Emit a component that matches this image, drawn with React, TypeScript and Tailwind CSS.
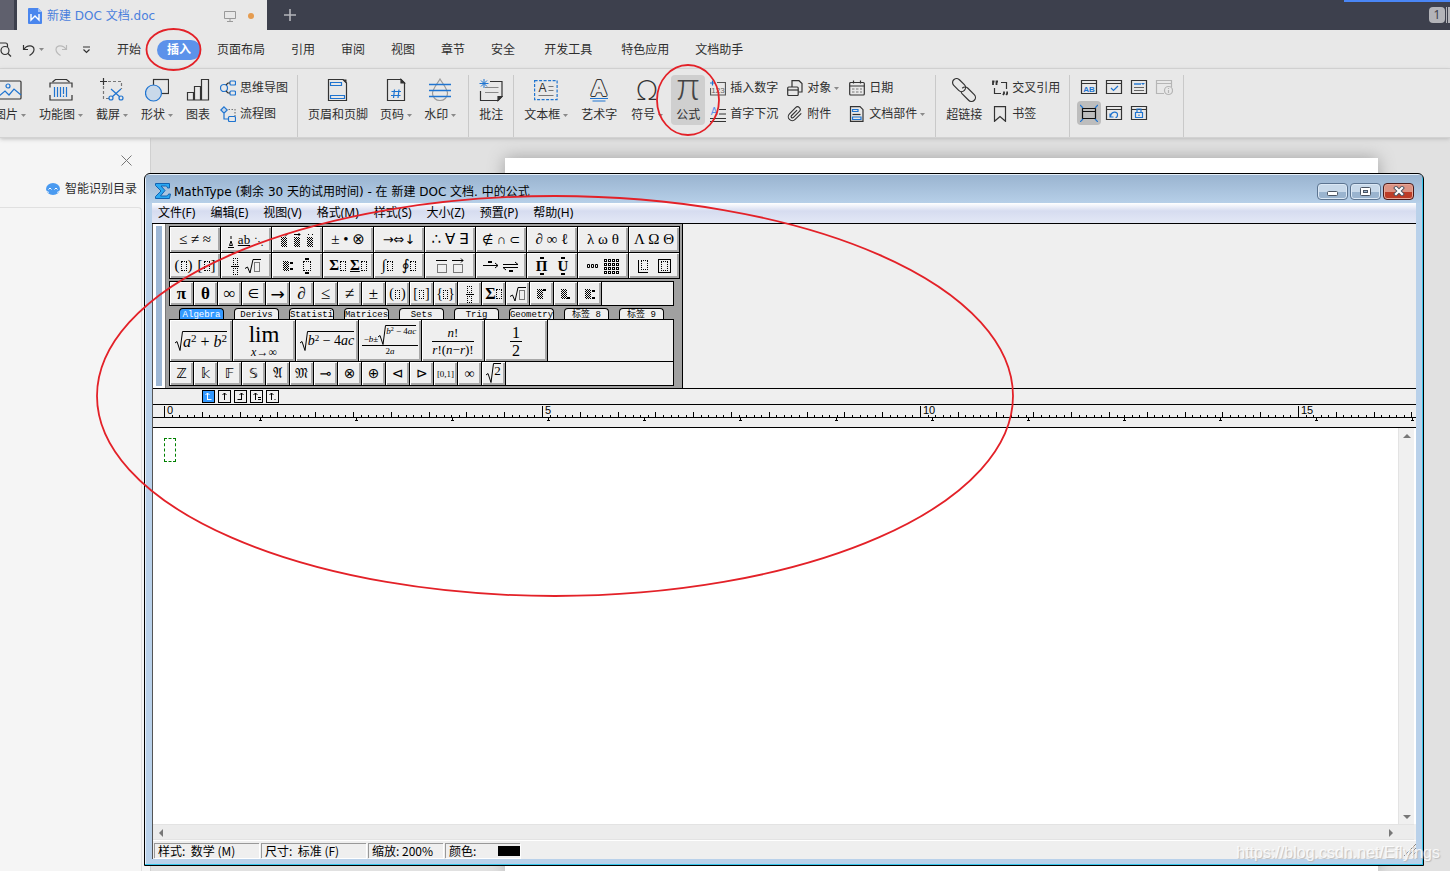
import type { ReactNode } from "react";
import clsx from "clsx";

interface WrapProps {
  children?: ReactNode;
  className?: string;
}

const INK = "#333333";
const BLUE = "#1f74d0";

/* ---------- ribbon helpers ---------- */

function Caret() {
  return (
    <svg width="5" height="3" viewBox="0 0 5 3" className="ml-[3px] shrink-0">
      <path d="M0 0h5L2.5 3z" fill="#8a8a8a" />
    </svg>
  );
}

function Icon({ w = 24, h = 24, children }: { w?: number; h?: number; children: ReactNode }) {
  return (
    <svg
      width={w}
      height={h}
      viewBox={`0 0 ${w} ${h}`}
      fill="none"
      stroke={INK}
      strokeWidth="1.2"
      className="shrink-0"
    >
      {children}
    </svg>
  );
}

interface GlyphProps {
  x: number;
  y: number;
  size: number;
  fill?: string;
  className?: string;
  children: string;
}

function Glyph({ x, y, size, fill = INK, className, children }: GlyphProps) {
  return (
    <text
      x={x}
      y={y}
      fontSize={size}
      fill={fill}
      stroke="none"
      textAnchor="middle"
      className={className ?? "font-['Liberation_Sans',sans-serif]"}
    >
      {children}
    </text>
  );
}

function Group({ children, className }: WrapProps) {
  return (
    <div className={clsx("flex h-[63px] items-start border-r border-[#c9c9c9] pl-2.5", className)}>
      {children}
    </div>
  );
}

interface ToolProps {
  label: string;
  icon: ReactNode;
  caret?: boolean;
  className?: string;
}

function BigTool({ label, icon, caret, className }: ToolProps) {
  return (
    <button
      className={clsx(
        "flex h-[50px] shrink-0 flex-col items-center gap-[5px] whitespace-nowrap rounded pt-[3px] leading-4",
        className
      )}
    >
      {icon}
      <span className="flex items-center">
        {label}
        {caret && <Caret />}
      </span>
    </button>
  );
}

function SmallTool({ label, icon, caret }: ToolProps) {
  return (
    <button className="flex h-[26px] items-center gap-1 whitespace-nowrap">
      {icon}
      <span className="flex items-center">
        {label}
        {caret && <Caret />}
      </span>
    </button>
  );
}

function Stack({ children, className }: WrapProps) {
  return <div className={clsx("flex shrink-0 flex-col", className)}>{children}</div>;
}

function FormTool({ label, active, children }: { label: string; active?: boolean; children: ReactNode }) {
  return (
    <button
      aria-label={label}
      className={clsx("flex h-6 w-6 items-center justify-center rounded", active && "bg-[#bdbdbd]")}
    >
      <Icon w={18} h={18}>
        {children}
      </Icon>
    </button>
  );
}

const formFrame = <path d="M1.5 2.5h15v13h-15zM1.5 5.5h15" />;

/* ---------- top of the editor ---------- */

function TabBar() {
  return (
    <div className="flex h-[30px] bg-[#3d404d]">
      <div className="mr-[3px] w-3.5 bg-[#5f606d]" />
      <div className="flex w-[250px] items-center bg-[#e8e8e8] pl-[11px] pr-[13px] pt-0.5 text-[#4a80dd]">
        <svg width="14" height="16" viewBox="0 0 14 16">
          <path d="M1 0h9l4 4v11a1 1 0 0 1-1 1H1a1 1 0 0 1-1-1V1a1 1 0 0 1 1-1z" fill="#4a86ee" />
          <path d="M10 0v4h4z" fill="#9fc0f8" />
          <path d="M3 6v6l4-4 4 4V6" fill="none" stroke="#fff" strokeWidth="1.4" />
        </svg>
        <a
          href="#doc"
          className="ml-[5px] flex-1 whitespace-nowrap font-['DejaVu_Sans','Noto_Sans_CJK_SC',sans-serif]"
        >
          新建 DOC 文档.doc
        </a>
        <svg width="12" height="11" viewBox="0 0 12 11" fill="none" stroke="#999">
          <path d="M.5.5h11v7H.5zM6 8v2M3 10.5h6" />
        </svg>
        <span className="ml-[12px] h-1.5 w-1.5 rounded-full bg-[#e59c50]" />
      </div>
      <button aria-label="新建标签" className="flex w-[46px] items-center justify-center">
        <svg width="12" height="12" viewBox="0 0 12 12" stroke="#b4b5bb" strokeWidth="1.6">
          <path d="M6 0v12M0 6h12" />
        </svg>
      </button>
      <div className="ml-auto flex h-full w-[106px] justify-end gap-px border-t-2 border-[#4a86f5] pt-[5px]">
        <span className="h-4 w-4 rounded-sm bg-[#b3b4b9] text-center leading-4 text-[#3d404d]">1</span>
        <span className="h-4 w-px bg-[#b3b4b9]" />
        <span className="h-4 w-0.5 bg-[#b3b4b9]" />
      </div>
    </div>
  );
}

const menus = ["页面布局", "引用", "审阅", "视图", "章节", "安全"];
const moreMenus = ["开发工具", "特色应用"];

function MenuBar() {
  return (
    <div className="flex h-[39px] items-center border-b border-[#d6d6d6] pt-px">
      <button aria-label="打印预览" className="-ml-1">
        <Icon w={16} h={16}>
          <path d="M1 1h8.5a2 2 0 0 1 2 2v2M4 14H1" />
          <circle cx="9" cy="8.5" r="4" />
          <path d="M12 11.5l3 3" />
        </Icon>
      </button>
      <button aria-label="撤销" className="ml-2.5 flex items-center">
        <Icon w={14} h={14}>
          <path d="M1.5 2v4.5h4.5M2 6.5C4.5 2 12 1.5 12 6.5c0 3-2 4.5-4.5 6" />
        </Icon>
        <Caret />
      </button>
      <button aria-label="恢复" className="ml-2.5">
        <svg width="14" height="14" viewBox="0 0 14 14" fill="none" stroke="#b9b9b9" strokeWidth="1.2">
          <path d="M12.5 2v4.5H8M12 6.5C9.5 2 2 1.5 2 6.5c0 3 2 4.5 4.5 6" />
        </svg>
      </button>
      <button aria-label="自定义" className="ml-3.5">
        <Icon w={9} h={8}>
          <path d="M1 1h7M1.5 3.5l3 3 3-3" />
        </Icon>
      </button>
      <nav className="ml-[26px] flex items-center gap-[26px] whitespace-nowrap pt-px">
        <button>开始</button>
        <button className="-mx-2.5 h-5 rounded-full bg-[#5c92ea] px-2.5 font-bold text-white">插入</button>
        {menus.map((m) => (
          <button key={m}>{m}</button>
        ))}
        {moreMenus.map((m) => (
          <button key={m} className="ml-[3px]">
            {m}
          </button>
        ))}
        <button>文档助手</button>
      </nav>
    </div>
  );
}

function Ribbon() {
  return (
    <div className="relative flex h-[69px] overflow-hidden border-b border-[#d2d2d2] pt-1.5 shadow-[0_1px_4px_#bbb]">
      <Group className="-ml-4 gap-[13px] pr-[9px]">
        <BigTool
          label="图片"
          caret
          icon={
            <Icon>
              <rect x="1" y="3" width="22" height="18" rx="1" />
              <g stroke={BLUE}>
                <circle cx="10" cy="8" r="2" />
                <path d="M1 18l6-5 4 4 5-6 7 6" />
              </g>
            </Icon>
          }
        />
        <BigTool
          label="功能图"
          caret
          icon={
            <Icon>
              <path d="M3.5 4l3-2.5h11l3 2.5M1 9.5V5h22v4.5M1 17v5h22v-5" />
              <path d="M5.5 9v10M8.5 9v10M11.5 9v10M14.5 9v7M17.5 9v10M14.5 17.5V19" stroke={BLUE} />
            </Icon>
          }
        />
        <BigTool
          label="截屏"
          caret
          icon={
            <Icon>
              <path d="M3.5 0v7M0 3.5h7" />
              <path d="M8 3.5h13.5V11M3.5 8v12.5H9" stroke="#777" strokeDasharray="3 2" />
              <g stroke={BLUE}>
                <path d="M11 11l9 8M21 11l-9 8" />
                <circle cx="11" cy="20" r="2" />
                <circle cx="21" cy="20" r="2" />
              </g>
            </Icon>
          }
        />
        <BigTool
          label="形状"
          caret
          icon={
            <Icon>
              <rect x="8.5" y="1.5" width="15" height="14" />
              <circle cx="8.5" cy="15" r="8" fill="#c9d9ea" stroke={BLUE} />
            </Icon>
          }
        />
        <BigTool
          label="图表"
          icon={
            <Icon>
              <path d="M1.5 22V14.5h6V22zM8.5 22V8.5h6V22zM15.5 22V1.5h7V22z" />
            </Icon>
          }
        />
        <Stack className="-ml-[3px]">
          <SmallTool
            label="思维导图"
            icon={
              <Icon w={16} h={16}>
                <g stroke={BLUE}>
                  <circle cx="4" cy="8" r="3.5" />
                  <rect x="10" y="1" width="5.5" height="4" rx="1" />
                  <rect x="10" y="11" width="5.5" height="4" rx="1" />
                </g>
                <path d="M6 5l2-2h2M6 11l2 2h2" />
              </Icon>
            }
          />
          <SmallTool
            label="流程图"
            icon={
              <Icon w={16} h={16}>
                <path d="M4 .8L7.2 4 4 7.2.8 4z" stroke={BLUE} fill="#c9d9ea" />
                <path d="M8.5 3.5H15V10" stroke="#777" strokeDasharray="1.5 1.5" />
                <path d="M4 7.5V13h4" stroke={BLUE} />
                <rect x="8.5" y="10.5" width="7" height="5" rx="1" stroke={BLUE} />
              </Icon>
            }
          />
        </Stack>
      </Group>

      <Group className="gap-3 pr-3">
        <BigTool
          label="页眉和页脚"
          icon={
            <Icon>
              <path d="M2.5 1.5H17l3.5 3.5v17.5h-18z" />
              <path d="M16.5 1.5L20.5 5.5v-4z" fill={INK} stroke="none" />
              <path d="M4.5 4.5h11v3h-11zM4.5 17.5h14v3h-14z" stroke={BLUE} />
            </Icon>
          }
        />
        <BigTool
          label="页码"
          caret
          icon={
            <Icon>
              <path d="M3.5 1.5H17l3.5 3.5v17.5h-17z" />
              <path d="M17 1.5V5h3.5z" fill={INK} />
              <path d="M10.5 11.5l-1 8.5M15 11.5l-1 8.5M7.5 13.5H17M7 17.5h9.5" stroke={BLUE} />
            </Icon>
          }
        />
        <BigTool
          label="水印"
          caret
          icon={
            <Icon>
              <path d="M12 1C9 6 4.5 11 4.5 15.5a7.5 7 0 0 0 15 0C19.5 11 15 6 12 1z" stroke="#999" />
              <path d="M1 6.5h22M1 12.5h22M1 18.5h22" stroke={BLUE} strokeWidth="1.4" />
            </Icon>
          }
        />
      </Group>

      <Group className="pr-2.5">
        <BigTool
          label="批注"
          icon={
            <Icon>
              <path d="M11 3.5h12v15l-4 4H1.5V13" />
              <path d="M23 18.5h-4v4z" fill={INK} />
              <path d="M6 9.5h13.5M6 14.5h13.5" stroke="#888" />
              <path d="M5 1v9M.5 5.5h9M2 2.5l6 6M8 2.5l-6 6" stroke={BLUE} strokeWidth="1" />
            </Icon>
          }
        />
      </Group>

      <Group className="gap-[13px] pr-2.5">
        <BigTool
          label="文本框"
          caret
          icon={
            <Icon>
              <rect x=".6" y="2.6" width="22.5" height="19" stroke={BLUE} strokeDasharray="3 1.5" />
              <Glyph x={8.5} y={14} size={12}>
                A
              </Glyph>
              <path d="M14.5 8.5h5M14.5 12.5h5M4.5 17.5h15" stroke="#777" />
            </Icon>
          }
        />
        <BigTool
          label="艺术字"
          icon={
            <Icon>
              <text
                x="12"
                y="17"
                fontSize="20"
                textAnchor="middle"
                strokeWidth="4"
                strokeLinejoin="round"
                className="font-['Liberation_Sans',sans-serif]"
              >
                A
              </text>
              <text
                x="12"
                y="17"
                fontSize="20"
                textAnchor="middle"
                stroke="#e8e8e8"
                strokeWidth="2"
                strokeLinejoin="round"
                className="font-['Liberation_Sans',sans-serif]"
              >
                A
              </text>
              <path d="M3 20.5h18M5.5 23h13" stroke={BLUE} />
            </Icon>
          }
        />
        <BigTool
          label="符号"
          caret
          className="ml-px"
          icon={
            <Icon>
              <Glyph x={12} y={22} size={28} className="font-['Lato','Open_Sans',sans-serif] font-light">
                Ω
              </Glyph>
            </Icon>
          }
        />
        <BigTool
          label="公式"
          className="-ml-[5px] bg-[#cfcfcf] px-[5px]"
          icon={
            <Icon>
              <Glyph x={12} y={22} size={40} fill="#444" className="font-['Lato','Open_Sans',sans-serif] font-light">
                π
              </Glyph>
            </Icon>
          }
        />
        <Stack className="-ml-2">
          <SmallTool
            label="插入数字"
            icon={
              <Icon w={16} h={16}>
                <path d="M7 2.5h8.5v12.5H.5V8" stroke="#555" />
                <path d="M0 3h5M2.5.5v5" stroke={BLUE} />
                <Glyph x={8} y={12.5} size={8} fill="#666">
                  123
                </Glyph>
              </Icon>
            }
          />
          <SmallTool
            label="首字下沉"
            icon={
              <Icon w={16} h={16}>
                <Glyph x={4} y={9} size={10} fill="#5c92ea">
                  A
                </Glyph>
                <path d="M9 3.5h7M9 8h7M0 12.5h16M0 15.5h16" />
              </Icon>
            }
          />
        </Stack>
        <Stack className="-ml-1">
          <SmallTool
            label="对象"
            caret
            icon={
              <Icon w={16} h={16}>
                <path d="M5 7V.7h7L15 3.5V12h-3.5" />
                <rect x=".7" y="7" width="10.5" height="8.5" rx="1" />
                <path d="M.7 10h10.5" />
              </Icon>
            }
          />
          <SmallTool
            label="附件"
            icon={
              <svg width="16" height="16" viewBox="0 0 24 24" fill="none" stroke={INK} strokeWidth="1.7">
                <path d="M21.4 11l-9.2 9.2a6 6 0 0 1-8.5-8.5l9.2-9.2a4 4 0 0 1 5.7 5.7l-9.2 9.2a2 2 0 0 1-2.8-2.8l8.5-8.5" />
              </svg>
            }
          />
        </Stack>
        <Stack className="-ml-[3px]">
          <SmallTool
            label="日期"
            icon={
              <Icon w={16} h={16}>
                <rect x=".7" y="2.5" width="14.6" height="12.5" rx="1" />
                <path d="M.7 6h14.6M4.5.5v3M11.5.5v3" />
                <path d="M3 9h2.5M7 9h2.5M11 9h2M3 12h2.5M7 12h2.5M11 12h2" stroke="#777" />
              </Icon>
            }
          />
          <SmallTool
            label="文档部件"
            caret
            icon={
              <Icon w={16} h={16}>
                <path d="M1.5.7H11l3 3v11.7H1.5z" />
                <path d="M3.5 3.5H9v2H3.5zM3.5 11h8.5v2.5H3.5z" stroke={BLUE} />
                <path d="M3.5 8.5h8" />
              </Icon>
            }
          />
        </Stack>
      </Group>

      <Group className="gap-2.5 pr-[9px]">
        <BigTool
          label="超链接"
          icon={
            <Icon>
              <g transform="rotate(45 12 12)">
                <rect x="-2.5" y="8" width="15" height="8" rx="4" />
                <path d="M9.5 12a4 4 0 0 1 4-4h9a4 4 0 0 1 0 8h-9a4 4 0 0 1-2.5-1" />
              </g>
            </Icon>
          }
        />
        <Stack>
          <SmallTool
            label="交叉引用"
            icon={
              <Icon w={16} h={16}>
                <path d="M1 5V1.5h1.5M4.5 5V1.5H6" strokeWidth="1.8" />
                <path d="M9 2.5h5.5V9M2.5 8v5.5H9" />
                <path d="M12 11.5v2l-1 1.5M15.2 11.5v2l-1 1.5" strokeWidth="1.8" />
              </Icon>
            }
          />
          <SmallTool
            label="书签"
            icon={
              <Icon w={16} h={16}>
                <path d="M2.5.7h11v14.6L8 10.5l-5.5 4.8z" />
              </Icon>
            }
          />
        </Stack>
      </Group>

      <Group className="!pl-[7px] pr-[7px]">
        <div className="grid grid-cols-4 gap-x-px gap-y-0.5">
          <FormTool label="文字型窗体域">
            {formFrame}
            <Glyph x={9} y={14} size={8} fill={BLUE} className="font-['Liberation_Sans',sans-serif] font-bold">
              AB
            </Glyph>
          </FormTool>
          <FormTool label="复选框窗体域">
            {formFrame}
            <path d="M6 10l2.5 2.5L13 8" stroke={BLUE} />
          </FormTool>
          <FormTool label="下拉型窗体域">
            <path d="M1.5 2.5h15v13h-15z" />
            <path d="M4 6h7" stroke={BLUE} strokeWidth="1.4" />
            <path d="M11 5h4l-2 2z" stroke="none" fill={BLUE} />
            <path d="M4 9.5h10M4 12.5h10" stroke="#666" />
          </FormTool>
          <FormTool label="窗体域选项">
            <g stroke="#b5b5b5">
              <path d="M9 15.5H1.5v-13h15V9M1.5 5.5h15" />
              <circle cx="13.5" cy="12.5" r="4" />
              <path d="M13.5 12v3M13.5 10v1" />
            </g>
          </FormTool>
          <FormTool label="窗体域底纹" active>
            <path d="M2.5 4.5h13v10h-13zM2.5 7.5h13" stroke="#111" />
            <path d="M0 1l3 3M18 1l-3 3M0 18l3-3M18 18l-3-3" stroke={BLUE} />
          </FormTool>
          <FormTool label="重新设置窗体域">
            {formFrame}
            <path d="M5 9.5v3.5h3.5M5.5 13C6 6.5 13 7 12.5 11c0 1.5-1 2.5-2 2.5" stroke={BLUE} />
          </FormTool>
          <FormTool label="保护窗体">
            {formFrame}
            <path d="M5.5 8.5h7v5h-7zM7 8.5V5h4v3.5M9 10.5v1.5" stroke={BLUE} />
          </FormTool>
        </div>
      </Group>
    </div>
  );
}

function Outline() {
  return (
    <aside className="flex w-[151px] shrink-0 flex-col border-r border-[#d0d0d0] bg-[#f5f5f5]">
      <button aria-label="关闭" className="ml-auto mr-[18px] mt-[17px]">
        <svg width="11" height="11" viewBox="0 0 11 11" stroke="#777">
          <path d="M.5.5l10 10M10.5.5l-10 10" />
        </svg>
      </button>
      <button className="mt-[13px] flex h-5 items-center gap-[5px] self-start whitespace-nowrap pl-[46px]">
        <svg width="14" height="12" viewBox="0 0 14 12">
          <ellipse cx="7" cy="6" rx="7" ry="6" fill="#4a9af0" />
          <path d="M2.5 6.5l1.5-1.5 1.5 1.5M8.5 6.5L10 5l1.5 1.5" fill="none" stroke="#fff" />
          <path d="M0 8l3 1.5M14 8l-3 1.5" stroke="#fff" strokeWidth=".8" />
        </svg>
        智能识别目录
      </button>
      <div className="mr-2 mt-2 flex-1 rounded-tr border-r border-t border-[#e0e0e0]" />
    </aside>
  );
}

/* ---------- equation editor ---------- */

function Slot({ className }: { className?: string }) {
  return (
    <span
      className={clsx("inline-block shrink-0 border border-dotted border-black", className ?? "h-2.5 w-1.5")}
    />
  );
}

function Fill() {
  return (
    <svg width="6" height="10" viewBox="0 0 6 10" className="shrink-0">
      {Array.from({ length: 30 }, (_, i) => {
        const row = Math.floor(i / 3);
        return <rect key={i} x={(i % 3) * 2 + (row % 2)} y={row} width="1" height="1" />;
      })}
    </svg>
  );
}

// A filled slot with an accent drawn above it
function Accent({ d }: { d: string }) {
  return (
    <span className="flex flex-col items-center">
      <svg width="7" height="4" viewBox="0 0 7 4" fill="none" stroke="#000">
        <path d={d} />
      </svg>
      <Fill />
    </span>
  );
}

function Root() {
  return (
    <svg width="16" height="15" viewBox="0 0 16 15" fill="none" stroke="#000">
      <path d="M0 9.5l2.5-1.5 2.5 6L8 .5h8" />
      <rect x="9.5" y="3.5" width="5" height="9" strokeDasharray="1 1" />
    </svg>
  );
}

function Fraction({ top, bottom }: { top: ReactNode; bottom: ReactNode }) {
  return (
    <span className="inline-flex flex-col text-center">
      <span className="border-b border-black px-0.5">{top}</span>
      <span>{bottom}</span>
    </span>
  );
}

function Radical({ children }: WrapProps) {
  return (
    <span className="inline-flex items-stretch">
      <svg
        width="8"
        height="100%"
        viewBox="0 0 8 20"
        preserveAspectRatio="none"
        className="shrink-0 self-stretch"
        fill="none"
        stroke="#000"
      >
        <path d="M0 12l2-1.5 3 9L7.5.5H8" />
      </svg>
      <span className="border-t border-black">{children}</span>
    </span>
  );
}

const slotFraction = (
  <span className="flex flex-col items-center gap-px">
    <Slot className="h-[7px] w-[5px]" />
    <span className="h-px w-2 bg-black" />
    <Slot className="h-[7px] w-[5px]" />
  </span>
);

const symbolCells: ReactNode[] = [
  "≤ ≠ ≈",
  <span className="flex items-end gap-1 text-[13px]">
    <svg width="6" height="12" viewBox="0 0 6 12" fill="none" stroke="#000">
      <path d="M3 0v3M1.5 9.5L3 5l1.5 4.5zM0 11.5h6" />
    </svg>
    <span className="leading-4 underline">ab</span>
    <span className="text-[10px]">⋱</span>
  </span>,
  <span className="flex gap-1.5">
    <Accent d="M4 3.5L7 .5" />
    <Accent d="M0 1.5h6M4.5 0L6 1.5 4.5 3" />
    <Accent d="M1 1.5h1M5 1.5h1" />
  </span>,
  "± • ⊗",
  <span className="flex items-center font-['DejaVu_Sans',sans-serif] text-[13px]">→⇔↓</span>,
  "∴ ∀ ∃",
  <span className="text-[13px]">∉ ∩ ⊂</span>,
  "∂ ∞ ℓ",
  "λ ω θ",
  "Λ Ω Θ",
];

const templateCells: ReactNode[] = [
  <span className="flex items-center gap-px">
    (<Slot />) <span className="ml-1">[</span>
    <Slot />]
  </span>,
  <span className="flex items-center gap-1.5">
    {slotFraction}
    <Root />
  </span>,
  <span className="flex items-center gap-2.5">
    <span className="flex items-center gap-px">
      <Fill />
      <span className="flex flex-col gap-1">
        <i className="h-0.5 w-[3px] bg-black" />
        <i className="h-0.5 w-[3px] bg-black" />
      </span>
    </span>
    <span className="flex flex-col items-center gap-px">
      <i className="h-0.5 w-1 bg-black" />
      <Slot className="h-2.5 w-2" />
      <i className="h-0.5 w-1 bg-black" />
    </span>
  </span>,
  <span className="flex items-center gap-px font-bold">
    Σ<Slot /> <span className="ml-[3px] underline">Σ</span>
    <Slot />
  </span>,
  <span className="flex items-center gap-px">
    ∫<Slot /> <span className="ml-2">∮</span>
    <Slot />
  </span>,
  <svg width="28" height="16" viewBox="0 0 28 16" fill="none" stroke="#000">
    <path d="M0 2.5h11M16 2.5h11M25 .5l2 2-2 2" />
    <path d="M1.5 6.5h9v8h-9zM17.5 6.5h9v8h-9z" strokeDasharray="1 1" />
  </svg>,
  <svg width="36" height="12" viewBox="0 0 36 12" fill="none" stroke="#000">
    <path d="M0 5.5h15M12 3l3 2.5-3 2.5M20 4.5h15M32 2l3 2.5M35 7.5H20M23 10l-3-2.5" />
    <path d="M5 2h4M26 11h4" strokeWidth="2" />
  </svg>,
  <span className="flex gap-2.5 font-bold leading-none">
    {["Π", "U"].map((s) => (
      <span key={s} className="flex flex-col items-center">
        <i className="h-0.5 w-1 bg-black" />
        <span className="leading-[14px]">{s}</span>
        <i className="h-0.5 w-1 bg-black" />
      </span>
    ))}
  </span>,
  <span className="flex items-center gap-1.5">
    <svg width="11" height="4" viewBox="0 0 11 4" fill="none" stroke="#000">
      <path d="M.5.5h2v3h-2zM4.5.5h2v3h-2zM8.5.5h2v3h-2z" />
    </svg>
    <svg width="16" height="15" viewBox="0 0 16 15">
      {Array.from({ length: 16 }, (_, i) => (
        <rect
          key={i}
          x={(i % 4) * 4 + 0.5}
          y={Math.floor(i / 4) * 4 + 0.5}
          width="2"
          height="2"
          fill="#fff"
          stroke="#000"
        />
      ))}
    </svg>
  </span>,
  <span className="flex items-center gap-2.5">
    <span className="flex border-b border-l border-black pb-0.5 pl-0.5">
      <Slot className="h-2.5 w-[7px]" />
    </span>
    <span className="flex border border-black px-0.5 py-px">
      <Slot className="h-2.5 w-[7px]" />
    </span>
  </span>,
];

const quickCells: ReactNode[] = [
  <b>π</b>,
  <b>θ</b>,
  "∞",
  <span className="text-[13px]">∈</span>,
  <span className="font-['DejaVu_Sans',sans-serif]">→</span>,
  <b>∂</b>,
  "≤",
  "≠",
  "±",
  <span className="flex items-center gap-px text-sm">
    (<Slot className="h-[9px] w-[5px]" />)
  </span>,
  <span className="flex items-center gap-px text-sm">
    [<Slot className="h-[9px] w-[5px]" />]
  </span>,
  <span className="flex items-center text-sm">
    {"{"}
    <Slot className="h-[9px] w-[5px]" />
    {"}"}
  </span>,
  slotFraction,
  <span className="flex items-center text-base">
    <b>Σ</b>
    <Slot />
  </span>,
  <Root />,
  <>
    <Fill />
    <i className="mb-2 h-0.5 w-[3px] bg-black" />
  </>,
  <>
    <Fill />
    <i className="mt-2 h-0.5 w-[3px] bg-black" />
  </>,
  <>
    <Fill />
    <span className="ml-px flex flex-col gap-[5px]">
      <i className="h-0.5 w-[3px] bg-black" />
      <i className="h-0.5 w-[3px] bg-black" />
    </span>
  </>,
];

const formulaCells: ReactNode[] = [
  <span className="pt-1 text-base leading-[19px]">
    <Radical>
      <i>a</i>
      <sup className="text-[11px] leading-none">2</sup> + <i>b</i>
      <sup className="text-[11px] leading-none">2</sup>
    </Radical>
  </span>,
  <span className="flex flex-col items-center">
    <span className="text-[23px] leading-[22px]">lim</span>
    <span className="text-xs leading-3">
      <i>x</i>→∞
    </span>
  </span>,
  <span className="pt-1 text-sm leading-[17px]">
    <Radical>
      <i>b</i>
      <sup className="text-[9px] leading-none">2</sup> − 4<i>ac</i>
    </Radical>
  </span>,
  <span className="text-[9px] leading-[11px]">
    <Fraction
      top={
        <span className="inline-flex items-end">
          −<i>b</i>±
          <Radical>
            <i>b</i>
            <sup className="text-[6px] leading-none">2</sup> − 4<i>ac</i>
          </Radical>
        </span>
      }
      bottom={
        <>
          2<i>a</i>
        </>
      }
    />
  </span>,
  <span className="text-[13px] leading-4">
    <Fraction
      top={
        <>
          <i>n</i>!
        </>
      }
      bottom={
        <>
          <i>r</i>!(<i>n</i>−<i>r</i>)!
        </>
      }
    />
  </span>,
  <span className="text-base leading-[17px]">
    <Fraction top="1" bottom="2" />
  </span>,
];

const smallCells: ReactNode[] = [
  "ℤ",
  "𝕜",
  "𝔽",
  "𝕊",
  "𝔄",
  "𝔐",
  "⊸",
  "⊗",
  "⊕",
  "⊲",
  "⊳",
  <span className="text-[9px]">[0,1]</span>,
  "∞",
  <span className="text-[13px] leading-[14px]">
    <Radical>2</Radical>
  </span>,
];

const algebraTabs = ["Algebra", "Derivs", "Statisti", "Matrices", "Sets", "Trig", "Geometry", "标签 8", "标签 9"];

function Cell({ children, className }: WrapProps) {
  return (
    <button
      className={clsx(
        "flex shrink-0 items-center justify-center whitespace-nowrap border-b border-r border-black bg-[#efefef] pt-px shadow-[inset_1px_1px_#fff,inset_-2px_-2px_#a8a8a8]",
        className
      )}
    >
      {children}
    </button>
  );
}

function Palette() {
  return (
    <div className="flex border-b border-black bg-[#efefef]">
      <div className="w-[13px] border-r border-[#777] bg-white px-[3px] pb-0.5 pt-0.5">
        <div className="h-full bg-[#9db7d5]" />
      </div>
      <div className="w-[517px] border-r border-black bg-[#a0a0a0] pb-0.5 pl-[3px] pt-0.5 font-['Liberation_Serif','DejaVu_Sans',serif]">
        <div className="flex w-[511px] flex-wrap border-l border-t border-black text-[15px]">
          {[...symbolCells, ...templateCells].map((c, i) => (
            <Cell key={i} className="h-[26px] w-[51px]">
              {c}
            </Cell>
          ))}
        </div>
        <div className="mt-0.5 flex w-[505px] border-l border-t border-black text-[17px]">
          {quickCells.map((c, i) => (
            <Cell key={i} className="h-6 w-6">
              {c}
            </Cell>
          ))}
          <div className="flex-1 border-b border-r border-black bg-[#efefef]" />
        </div>
        <div className="mt-0.5 flex gap-2.5 pl-2.5 font-['Liberation_Mono','Noto_Sans_CJK_SC',monospace] text-[9px]">
          {algebraTabs.map((t, i) => (
            <button
              key={t}
              className={clsx(
                "flex h-[11px] w-[45px] items-center justify-center whitespace-nowrap rounded-t border border-b-0 border-black pt-0.5 leading-[10px]",
                i === 0 ? "bg-[#3399ff] text-white" : "bg-[#efefef]"
              )}
            >
              {t}
            </button>
          ))}
        </div>
        <div className="flex w-[505px] border-l border-t border-black text-base">
          {formulaCells.map((c, i) => (
            <Cell key={i} className="h-[42px] w-[63px]">
              {c}
            </Cell>
          ))}
          <div className="flex-1 border-b border-r border-black bg-[#efefef]" />
        </div>
        <div className="flex w-[505px] border-l border-black text-sm">
          {smallCells.map((c, i) => (
            <Cell key={i} className="h-6 w-6">
              {c}
            </Cell>
          ))}
          <div className="flex-1 border-b border-r border-black bg-[#efefef]" />
        </div>
      </div>
    </div>
  );
}

const tabStops = [
  { label: "左对齐", d: "M4.5 9V2M2.5 4l2-2 2 2M4.5 8.5h4" },
  { label: "居中", d: "M5.5 9V2M3.5 4l2-2 2 2" },
  { label: "右对齐", d: "M6.5 9V2M4.5 4l2-2 2 2M6.5 8.5h-4" },
  { label: "等号对齐", d: "M4.5 9V2M2.5 4l2-2 2 2M7 6.5h3M7 8.5h3" },
  { label: "小数点对齐", d: "M4.5 9V2M2.5 4l2-2 2 2M7.5 8.5h1" },
];

function Ruler() {
  const ticks = Array.from({ length: 170 }, (_, i) => i);
  return (
    <>
      <div className="flex h-4 items-center gap-[3px] border-b border-black bg-[#efefef] pl-[49px]">
        {tabStops.map((t, i) => (
          <button
            key={t.label}
            aria-label={t.label}
            className={clsx("border border-black", i === 0 ? "bg-[#3399ff] text-white" : "bg-[#efefef]")}
          >
            <svg width="11" height="11" viewBox="0 0 11 11" fill="none" stroke="currentColor">
              <path d={t.d} />
            </svg>
          </button>
        ))}
      </div>
      <svg
        width="100%"
        height="23"
        className="block border-b border-black bg-[#efefef]"
        shapeRendering="crispEdges"
        stroke="#000"
      >
        <path d="M0 12.5h2000" />
        {ticks.map((i) => {
          const x = Math.round(11 + i * 7.56) + 0.5;
          const top = i % 50 === 0 ? 1 : i % 5 === 0 ? 7 : 10;
          return <path key={i} d={`M${x} ${top}V12`} />;
        })}
        {ticks.slice(1, 15).map((i) => (
          <path key={i} d={`M${11.5 + i * 96} 13v3m-1.5-.5h3`} />
        ))}
        {[0, 5, 10, 15].map((n) => (
          <text
            key={n}
            x={14 + n * 75.6}
            y="9"
            fill="#000"
            stroke="none"
            className="font-['Liberation_Sans',sans-serif] text-[11px]"
          >
            {n}
          </text>
        ))}
      </svg>
    </>
  );
}

function Arrow({ d, label }: { d: string; label: string }) {
  return (
    <button aria-label={label} className="flex h-[15px] w-[15px] items-center justify-center">
      <svg width="8" height="8" viewBox="0 0 8 8" fill="#777">
        <path d={d} />
      </svg>
    </button>
  );
}

function StatusField({ children, className }: WrapProps) {
  return (
    <span
      className={clsx(
        "flex h-[15px] items-center whitespace-nowrap border-l border-t border-[#999] pl-[3px] pt-px shadow-[1px_1px_#fff]",
        className
      )}
    >
      {children}
    </span>
  );
}

const mathMenus = ["文件(F)", "编辑(E)", "视图(V)", "格式(M)", "样式(S)", "大小(Z)", "预置(P)", "帮助(H)"];

const captionButton =
  "flex h-[17px] w-[31px] items-center justify-center rounded-sm border border-[#5c7490] bg-linear-to-b from-[#c8d9ea] from-50% to-[#9ab4cf] to-50% shadow-[inset_0_0_0_1px_#dbe8f5]";

function MathWindow() {
  return (
    <section className="absolute bottom-[5px] left-36 right-[26px] top-[173px] flex flex-col overflow-hidden rounded-t-md border border-black bg-[#b9d1ea] pb-[6px] pl-[7px] pr-[7px] pt-px text-black shadow-[inset_-1px_-1px_#35c5ea,inset_1px_1px_#e6f0fa]">
      <div className="-mx-1.5 flex h-7 shrink-0 items-center bg-linear-to-b from-[#9ab4d0] to-[#b6cfe8] pl-[9px] pr-2">
        <svg width="16" height="16" viewBox="0 0 16 16" className="mt-1">
          <path
            d="M.5.5h14v4.5h-2c0-1.5-1-2-2-2H6l4 4.500L5.5 13H11c1.5 0 2-.5 2.5-2h2l-1 4.500H.5v-2L6 8 .5 2.5z"
            fill="#2aa8f2"
            stroke="#1262b0"
          />
        </svg>
        <h1 className="ml-[3px] mt-1.5 flex-1 whitespace-nowrap font-['DejaVu_Sans','Noto_Sans_CJK_SC',sans-serif]">
          MathType (剩余 30 天的试用时间) - 在 新建 DOC 文档. 中的公式
        </h1>
        <div className="mt-1 flex gap-0.5">
          <button aria-label="最小化" className={clsx(captionButton, "pt-1")}>
            <svg width="11" height="5" viewBox="0 0 11 5">
              <rect x=".5" y=".5" width="10" height="4" rx="1" fill="#fff" stroke="#4b5563" />
            </svg>
          </button>
          <button aria-label="最大化" className={captionButton}>
            <svg width="11" height="9" viewBox="0 0 11 9" stroke="#4b5563">
              <rect x=".5" y=".5" width="10" height="8" rx="1" fill="#fff" />
              <rect x="3.5" y="3.5" width="4" height="2" fill="#9ab4cf" />
            </svg>
          </button>
          <button
            aria-label="关闭窗口"
            className="flex h-[17px] w-[31px] items-center justify-center rounded-sm border border-[#4a1a1a] bg-linear-to-b from-[#dc9384] from-50% to-[#bd3c27] to-50% shadow-[inset_0_0_0_1px_#e8a898]"
          >
            <svg width="12" height="10" viewBox="0 0 12 10" fill="none" strokeLinecap="square">
              <path d="M3 2l6 6M9 2L3 8" stroke="#4b5563" strokeWidth="4" />
              <path d="M3 2l6 6M9 2L3 8" stroke="#fff" strokeWidth="2.2" />
            </svg>
          </button>
        </div>
      </div>
      <div className="flex h-[21px] shrink-0 items-center gap-[15px] border-b border-black bg-linear-to-b from-white via-[#d6dcf0] via-40% to-[#e3e8f6] pl-1.5">
        {mathMenus.map((m) => (
          <button key={m} className="whitespace-nowrap">
            {m}
          </button>
        ))}
      </div>
      <div className="flex min-h-0 flex-1 flex-col border-l border-[#555] bg-[#efefef]">
        <Palette />
        <Ruler />
        <div className="flex min-h-0 flex-1 bg-white">
          <div role="textbox" aria-label="公式" className="flex-1 pl-[11px] pt-2.5">
            <div className="h-6 w-3 border border-dashed border-[#008000]" />
          </div>
          <div className="mr-0.5 flex w-4 flex-col justify-between border-l border-[#e3e3e3] bg-[#f0f0f0]">
            <Arrow label="向上滚动" d="M4 2l4 4H0z" />
            <Arrow label="向下滚动" d="M0 2h8L4 6z" />
          </div>
        </div>
        <div className="mr-0.5 flex h-4 shrink-0 justify-between border-b border-t border-[#e3e3e3] bg-[#ececec] pr-4">
          <Arrow label="向左滚动" d="M2 4l4-4v8z" />
          <Arrow label="向右滚动" d="M2 0l4 4-4 4z" />
        </div>
        <div className="flex h-[19px] shrink-0 items-center gap-0.5 border-t border-white pl-px font-['Noto_Sans_CJK_SC',sans-serif]">
          <StatusField className="w-[105px]">样式: &nbsp;数学 (M)</StatusField>
          <StatusField className="w-[105px]">尺寸: &nbsp;标准 (F)</StatusField>
          <StatusField className="w-[75px]">缩放: 200%</StatusField>
          <StatusField className="w-[75px]">
            颜色:
            <span className="ml-auto h-2.5 w-[22px] bg-black" />
          </StatusField>
          <svg width="12" height="12" viewBox="0 0 12 12" stroke="#888" className="ml-auto">
            <path d="M0 12L12 0M4 12l8-8M8 12l4-4" />
          </svg>
        </div>
      </div>
    </section>
  );
}

export default function App() {
  return (
    <div className="relative flex h-screen flex-col overflow-hidden bg-[#e8e8e8] font-['Noto_Sans','Noto_Sans_CJK_SC',sans-serif] text-xs text-[#2f2f2f]">
      <TabBar />
      <MenuBar />
      <Ribbon />
      <main className="flex min-h-0 flex-1 bg-[#e1e1e1]">
        <Outline />
        <div className="ml-[354px] mr-[72px] mt-5 flex-1 bg-white shadow-[0_0_16px_#a0a0a0]" />
      </main>
      <MathWindow />
      <svg
        className="pointer-events-none absolute left-0 top-0 h-full w-full"
        fill="none"
        stroke="#e32128"
        strokeWidth="1.8"
      >
        <ellipse cx="173.5" cy="49.5" rx="27" ry="20.5" />
        <ellipse cx="688" cy="100" rx="31" ry="35" />
        <ellipse cx="555" cy="396" rx="458" ry="200" />
      </svg>
      <a
        href="https://blog.csdn.net/Eflyings"
        className="absolute bottom-1.5 right-2.5 font-['Liberation_Sans',sans-serif] text-base text-white/80 [text-shadow:1px_1px_1px_#bbb]"
      >
        https://blog.csdn.net/Eflyings
      </a>
    </div>
  );
}
